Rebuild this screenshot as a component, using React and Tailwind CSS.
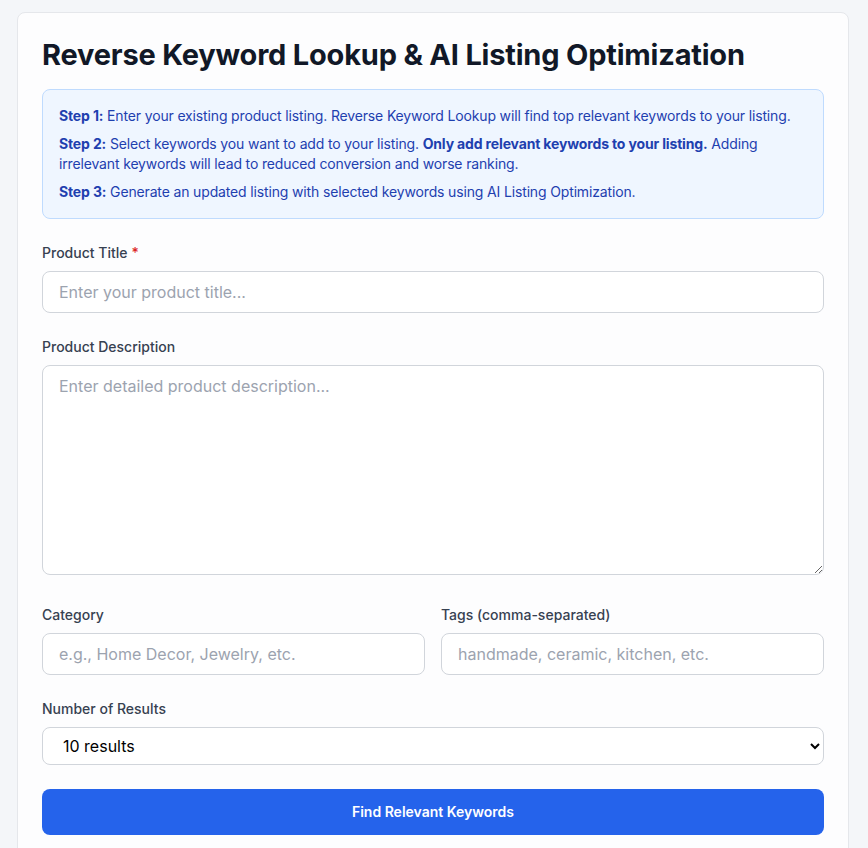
import { useState } from "react";

const inputClass =
  "w-full rounded-lg border border-[#d1d5db] bg-white px-4 py-2 text-base text-gray-900 placeholder:text-[#9ca3af] focus:outline-none";

const Label = ({ children, required }) => (
  <label className="mb-2 block text-sm font-medium text-[#374151]">
    {children}
    {required && <span className="ml-1 text-[#dc2626]">*</span>}
  </label>
);

export default function App() {
  const [title, setTitle] = useState("");
  const [description, setDescription] = useState("");
  const [category, setCategory] = useState("");
  const [tags, setTags] = useState("");
  const [count, setCount] = useState("10");

  return (
    <div
      className="min-h-screen bg-[#f4f6f9] pl-[17px] pt-3"
      style={{ fontFamily: "Inter, 'Noto Sans', sans-serif" }}
    >
      <div className="w-[832px] rounded-lg border border-[#e5e7eb] bg-[#fdfdfe] p-6">
        <h1 className="mb-4 text-[29px] font-bold leading-9 tracking-[-0.2px] text-[#111827]">
          Reverse Keyword Lookup &amp; AI Listing Optimization
        </h1>

        <div className="space-y-2 rounded-lg border border-[#bfdbfe] bg-[#eff6ff] p-4 text-sm leading-5 tracking-[-0.15px] text-[#1e40af]">
          <p>
            <b className="font-bold">Step 1:</b> Enter your existing product listing. Reverse Keyword Lookup
            will find top relevant keywords to your listing.
          </p>
          <p>
            <b className="font-bold">Step 2:</b> Select keywords you want to add to your listing.{" "}
            <b className="font-bold">Only add relevant keywords to your listing.</b> Adding irrelevant
            keywords will lead to reduced conversion and worse ranking.
          </p>
          <p>
            <b className="font-bold">Step 3:</b> Generate an updated listing with selected keywords using
            AI Listing Optimization.
          </p>
        </div>

        <form className="mt-6 space-y-6" onSubmit={(e) => e.preventDefault()}>
          <div>
            <Label required>Product Title</Label>
            <input
              className={inputClass}
              placeholder="Enter your product title..."
              value={title}
              onChange={(e) => setTitle(e.target.value)}
            />
          </div>

          <div>
            <Label>Product Description</Label>
            <textarea
              rows={8}
              className={`${inputClass} block`}
              placeholder="Enter detailed product description..."
              value={description}
              onChange={(e) => setDescription(e.target.value)}
            />
          </div>

          <div className="grid grid-cols-2 gap-4 pt-[6px]">
            <div>
              <Label>Category</Label>
              <input
                className={inputClass}
                placeholder="e.g., Home Decor, Jewelry, etc."
                value={category}
                onChange={(e) => setCategory(e.target.value)}
              />
            </div>
            <div>
              <Label>Tags (comma-separated)</Label>
              <input
                className={inputClass}
                placeholder="handmade, ceramic, kitchen, etc."
                value={tags}
                onChange={(e) => setTags(e.target.value)}
              />
            </div>
          </div>

          <div>
            <Label>Number of Results</Label>
            <select
              className="h-[38px] w-full rounded-lg border border-[#d1d5db] bg-white px-4 text-base text-black focus:outline-none"
              value={count}
              onChange={(e) => setCount(e.target.value)}
            >
              <option value="10">10 results</option>
              <option value="20">20 results</option>
              <option value="30">30 results</option>
              <option value="50">50 results</option>
            </select>
          </div>

          <button
            type="submit"
            className="h-[46px] w-full rounded-lg bg-[#2563eb] text-sm font-semibold text-white"
          >
            Find Relevant Keywords
          </button>
        </form>
      </div>
    </div>
  );
}
